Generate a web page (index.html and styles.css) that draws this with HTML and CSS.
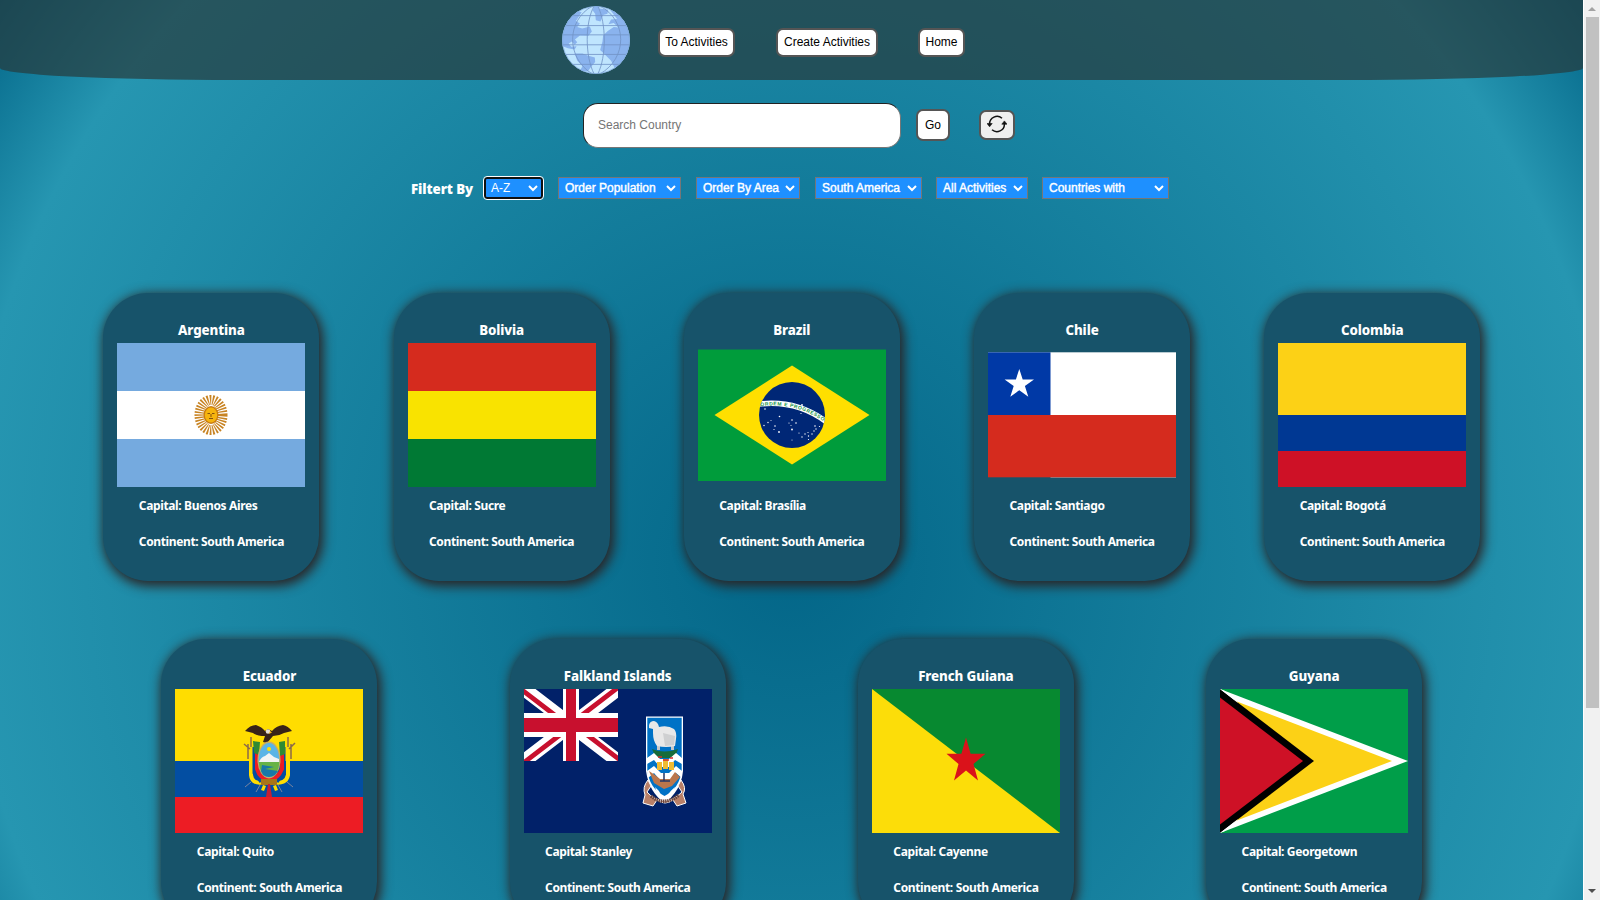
FILE: index.html
```html
<!DOCTYPE html>
<html lang="en">
<head>
<meta charset="utf-8">
<title>Countries</title>
<link rel="stylesheet" href="styles.css">
</head>
<body>
<div class="page">
<header class="nav">
  <svg class="globe" viewBox="66 17 205 205">
    <defs><clipPath id="disc"><circle cx="168.500" cy="119.500" r="102"/></clipPath></defs>
    <g clip-path="url(#disc)">
      <rect x="60" y="10" width="220" height="220" fill="#bfe5fe"/>
      <g fill="#8ab3ee">
        <path d="M60 135V60L105 30L125 36L108 62L120 70L112 80L127 85L150 79L156 94L146 107L120 106L105 118L112 126L104 134L96 124L86 130L94 140L110 138L104 148L84 144Z"/>
        <path d="M165 15L182 18L176 24L205 28L203 40L190 44L182 64L168 60L166 40L158 30Z"/>
        <path d="M212 30L290 40V230H215L225 205L214 182L196 164L181 150L188 124L190 106L204 92L222 80L236 82L222 68L206 72L214 58L232 56Z"/>
        <path d="M104 160L128 160L143 166L165 172L166 186L154 200L144 214L120 212L128 198L112 182Z"/>
      </g>
      <g fill="none" stroke="#7294c6" stroke-width="2.500">
        <path d="M60 46H280M60 76H280M60 104H280M60 134H280M60 163H280M60 193H280"/>
        <path d="M163 17C135 65 135 170 163 222M174 17C200 70 200 170 174 222M158 17C78 60 78 175 158 222M180 17C264 60 264 175 180 222"/>
      </g>
    </g>
    <circle cx="168.500" cy="119.500" r="101" fill="none" stroke="#7fa9dd" stroke-width="2"/>
  </svg>
  <button class="btn b1">To Activities</button>
  <button class="btn b2">Create Activities</button>
  <button class="btn b3">Home</button>
</header>
<div class="search">
  <input class="field" type="text" placeholder="Search Country">
  <button class="btn go">Go</button>
  <button class="btn reload"><svg viewBox="0 0 20 18" width="20" height="18"><g fill="none" stroke="#111" stroke-width="1.500"><path d="M2.600 9A7.500 7.500 0 0 1 15 3.200"/><path d="M17.400 9A7.500 7.500 0 0 1 5 14.800"/></g><path d="M0 8.500H5.200L2.600 11.800ZM14.800 9.200H20L17.400 5.900Z" fill="#111" stroke="#111" stroke-width=".6"/></svg></button>
</div>
<div class="filters">
  <span class="label">Filtert By</span>
  <div class="sel s1"><span>A-Z</span><svg class="chev" viewBox="0 0 10 7"><path d="M1 1L5 5L9 1"/></svg></div>
  <div class="sel s2"><span>Order Population</span><svg class="chev" viewBox="0 0 10 7"><path d="M1 1L5 5L9 1"/></svg></div>
  <div class="sel s3"><span>Order By Area</span><svg class="chev" viewBox="0 0 10 7"><path d="M1 1L5 5L9 1"/></svg></div>
  <div class="sel s4"><span>South America</span><svg class="chev" viewBox="0 0 10 7"><path d="M1 1L5 5L9 1"/></svg></div>
  <div class="sel s5"><span>All Activities</span><svg class="chev" viewBox="0 0 10 7"><path d="M1 1L5 5L9 1"/></svg></div>
  <div class="sel s6"><span>Countries with</span><svg class="chev" viewBox="0 0 10 7"><path d="M1 1L5 5L9 1"/></svg></div>
</div>
<main class="cards">
 <div class="row">
  <article class="card"><h3>Argentina</h3>
    <svg class="flag" viewBox="0 0 188 144"><rect width="188" height="144" fill="#75aadf"/><rect y="48" width="188" height="48" fill="#fff"/>
      <ellipse cx="94" cy="72" rx="11.500" ry="15" fill="none" stroke="#c88424" stroke-width="10" stroke-dasharray="1.400 1.150"/><ellipse cx="94" cy="72" rx="7.500" ry="9" fill="#c77a12"/><ellipse cx="94" cy="72" rx="6.200" ry="7.500" fill="#f6b40e"/><path d="M90.500 70.500H93M95 70.500H97.500M92 75.500H96M94 71V74" stroke="#85500c" stroke-width="1"/></svg>
    <p>Capital: Buenos Aires</p><p>Continent: South America</p></article>
  <article class="card"><h3>Bolivia</h3>
    <svg class="flag" viewBox="0 0 188 144"><rect width="188" height="48" fill="#d52b1e"/><rect y="48" width="188" height="48" fill="#f9e300"/><rect y="96" width="188" height="48" fill="#007934"/></svg>
    <p>Capital: Sucre</p><p>Continent: South America</p></article>
  <article class="card"><h3>Brazil</h3>
    <svg class="flag" viewBox="0 0 188 144"><defs><clipPath id="orb"><circle cx="94" cy="72" r="33"/></clipPath><path id="arc" d="M62.500 63.200Q98 58.500 127 79.500"/></defs>
      <rect y="6.500" width="188" height="131.500" fill="#009c3b"/><path d="M16.500 72L94 22.500L171.500 72L94 121.500Z" fill="#ffdf00"/><circle cx="94" cy="72" r="33" fill="#002776"/>
      <path clip-path="url(#orb)" d="M58 61.500Q98 55.500 130 80" fill="none" stroke="#fff" stroke-width="5.500"/>
      <text class="motto"><textPath href="#arc" textLength="66" lengthAdjust="spacing">ORDEM E PROGRESSO</textPath></text>
      <g fill="#fff"><circle cx="67" cy="66" r=".8"/><circle cx="104" cy="62" r=".9"/><circle cx="103" cy="70.500" r=".6"/><circle cx="81.500" cy="73.500" r=".8"/><circle cx="70" cy="79.500" r=".7"/><circle cx="73" cy="77.500" r=".5"/><circle cx="66" cy="82.500" r=".7"/><circle cx="77" cy="83" r=".8"/><circle cx="76" cy="86.500" r=".6"/><circle cx="81" cy="89" r=".9"/><circle cx="94" cy="77" r=".8"/><circle cx="91" cy="80" r=".6"/><circle cx="98" cy="80" r=".8"/><circle cx="93" cy="82.500" r=".5"/><circle cx="94" cy="86.500" r=".9"/><circle cx="94" cy="97" r=".5"/><circle cx="101" cy="90" r=".6"/><circle cx="104" cy="94" r=".7"/><circle cx="107" cy="91" r=".7"/><circle cx="110" cy="89.500" r=".6"/><circle cx="110.500" cy="93" r=".7"/><circle cx="110.500" cy="96.500" r=".6"/><circle cx="114" cy="91" r=".7"/><circle cx="116" cy="88" r=".7"/><circle cx="118" cy="86" r=".7"/><circle cx="117" cy="83" r=".8"/><circle cx="121.500" cy="83.500" r=".6"/></g></svg>
    <p>Capital: Brasília</p><p>Continent: South America</p></article>
  <article class="card"><h3>Chile</h3>
    <svg class="flag" viewBox="0 0 188 144"><rect y="9.300" width="188" height="63" fill="#fff"/><rect x="62.500" y="134" width="125.500" height="1" fill="#fff" opacity=".4"/><rect y="72" width="188" height="62.300" fill="#d52b1e"/><rect y="9.300" width="62.500" height="62.700" fill="#0039a6"/><path fill="#fff" d="M31.300 26L34.700 36.400H46L36.900 43L40.300 53.700L31.300 47.200L22.300 53.700L25.700 43L16.600 36.400H27.900Z"/></svg>
    <p>Capital: Santiago</p><p>Continent: South America</p></article>
  <article class="card"><h3>Colombia</h3>
    <svg class="flag" viewBox="0 0 188 144"><rect width="188" height="72" fill="#fcd116"/><rect y="72" width="188" height="36" fill="#003893"/><rect y="108" width="188" height="36" fill="#ce1126"/></svg>
    <p>Capital: Bogotá</p><p>Continent: South America</p></article>
 </div>
 <div class="row">
  <article class="card"><h3>Ecuador</h3>
    <svg class="flag" viewBox="0 0 188 144"><rect width="188" height="72" fill="#fd0"/><rect y="72" width="188" height="36" fill="#034ea2"/><rect y="108" width="188" height="36" fill="#ed1c24"/>
      <g fill="none"><path d="M76 53V86Q77 96 90 93M113 53V86Q111 96 98 93" stroke="#ffdd00" stroke-width="4"/><path d="M79 58V84L86 93M109 58V84L102 93" stroke="#034ea2" stroke-width="3"/><path d="M82 60V80Q85 90 94 91Q103 90 107 80V60" stroke="#ed1c24" stroke-width="4"/>
      <path d="M73 70V55M69 55L75 60M76 48V58M116 70V55M120 54L114 60M113 48V58" stroke="#8c6a4a" stroke-width="1.500"/><path d="M70 98L76 93M81 103L85 96M118 98L112 93M107 103L103 96" stroke="#7884a0" stroke-width="1"/></g>
      <path d="M78 52L85 53L84 66L79 64ZM104 53L110 52V65L105 67Z" fill="#2f8a34"/>
      <path d="M70 42Q75 36 81 36Q87 38 90 42L93 40L97 42Q101 37 108 36Q113 37 117 42L109 44Q104 47 98 47L92 54L88 53L90 47Q82 47 78 44Z" fill="#382318"/><circle cx="93" cy="42.500" r="2.300" fill="#e8e0d5"/><path d="M95 42L97 43.500L94 45Z" fill="#f6b40e"/>
      <ellipse cx="94" cy="71" rx="11.500" ry="18.500" fill="#c9ad66"/><ellipse cx="94" cy="71" rx="10.300" ry="17" fill="#5ab4e6"/><path d="M84 73Q86 68 90 67L94 64L99 68L104 70V74Z" fill="#f2f4f4"/><path d="M83.700 73H104.300Q104 80 101 84H87Q84 79 83.700 73Z" fill="#67b346"/><path d="M87 76L99 78L90 80L103 82L100 86Q94 90 88 86L86 82Z" fill="#1878a8"/><circle cx="94" cy="60" r="2" fill="#fd0"/>
      <path d="M86 90H102V96H86Z" fill="#a97518"/><path d="M88 96L91 97L89 102L86 101ZM98 97L101 96L103 101L100 102Z" fill="#fd0"/><path d="M93 95H95L97 108H91Z" fill="#c51f34"/></svg>
    <p>Capital: Quito</p><p>Continent: South America</p></article>
  <article class="card"><h3>Falkland Islands</h3>
    <svg class="flag" viewBox="0 0 188 144"><defs><clipPath id="jack"><rect width="94" height="72"/></clipPath></defs><rect width="188" height="144" fill="#012169"/>
      <g clip-path="url(#jack)"><path d="M0 0L94 72M94 0L0 72" stroke="#fff" stroke-width="14"/><path d="M-2 1L45 37M49 35L96 71M-2 75L45 39M49 33L96 -3" stroke="#c8102e" stroke-width="4.800"/><path d="M47 0V72" stroke="#fff" stroke-width="16"/><path d="M0 36H94" stroke="#fff" stroke-width="24"/><path d="M42 0H52V29H94V43H52V72H42V43H0V29H42Z" fill="#c8102e"/></g>
      <path d="M122 27.500H159V82Q157 102 140.500 114Q125 103 122 82Z" fill="#fff"/><path d="M123.300 28.800H157.700V81Q156 99 140.500 107Q125 99 123.300 81Z" fill="#0072c6"/>
      <path d="M133 54V61H136V56H147V61H150V54Z" fill="#c9c9c9"/><path d="M125 36Q126 32 130 32Q134 33 135 38Q144 36 150 40Q153 43 152 50L151 57Q142 59 133 57Q129 52 129 44L129 40L125 39Z" fill="#e8e8e8"/><path d="M139 44L151 47L150 56L141 57Z" fill="#cfd0d1"/>
      <path d="M128 60Q140 65 154 60L151 69H132Z" fill="#176b3a"/>
      <path d="M123 69L130 64L136 70L145 70L152 64L158 69V75L151 71L145 78L136 78L130 71L123 75ZM123 82L130 77L137 84H145L152 77L158 82V89L152 84L146 91H136L130 84L124 89Z" fill="#fff"/>
      <path d="M133 73H138V81H133ZM139 70H144V80H139ZM145 73H150V81H145Z" fill="#f0bb32"/><path d="M134 68H138M139 71H145M146 69H149" stroke="#d32e2e" stroke-width="1.500"/><path d="M125 82L131 86L136 90H146L151 83L156 88L148 97L140 100L130 94Z" fill="#ba764c"/><path d="M136 92H146M140 84V92" stroke="#253767" stroke-width="1.500"/>
      <path d="M131 98Q135 101 137 106Q140.500 109 144 106Q147 101 151 98L146 110L140.500 113L135 109Z" fill="#fff"/>
      <path d="M124 91Q118 98 121 106L119 114L129 117L133 111Q141 117 149 111L153 117L162 114L159 105Q163 99 157 91L154 97L158 103Q149 112 140.500 112Q130 111 123 103L127 97Z" fill="#b98068" stroke="#fff" stroke-width="1"/><path d="M127 107Q140 118 155 106" fill="none" stroke="#6b463d" stroke-width="3.500" stroke-dasharray="1.500 .7"/></svg>
    <p>Capital: Stanley</p><p>Continent: South America</p></article>
  <article class="card"><h3>French Guiana</h3>
    <svg class="flag" viewBox="0 0 188 144"><rect width="188" height="144" fill="#078930"/><path d="M0 0L188 144H0Z" fill="#fcdd09"/><path fill="#da121a" d="M94 48.500L98.600 64.800H113.500L101.500 75L106 91.500L94 81.500L82 91.500L86.500 75L74.500 64.800H89.400Z"/></svg>
    <p>Capital: Cayenne</p><p>Continent: South America</p></article>
  <article class="card"><h3>Guyana</h3>
    <svg class="flag" viewBox="0 0 188 144"><rect width="188" height="144" fill="#009e49"/><path d="M0 0L188 72L0 144Z" fill="#fff"/><path d="M0 6L172 72L0 138Z" fill="#fcd116"/><path d="M0 0L94 72L0 144Z" fill="#000"/><path d="M0 8.500L83 72L0 135.500Z" fill="#ce1126"/><path d="M0 0L18 14L17 12.500L4 1.500ZM0 144L18 130L17 131.500L4 142.500Z" fill="#fff"/></svg>
    <p>Capital: Georgetown</p><p>Continent: South America</p></article>
 </div>
</main>
</div>
<div class="scrollbar"><i class="up"></i><i class="thumb"></i><i class="down"></i></div>
</body>
</html>
```
FILE: styles.css
```css
* { box-sizing: border-box; }
body { margin: 0; height: 900px; overflow: hidden; display: grid; grid-template-columns: 1583px 17px; }
.page { height: 1126px; background: radial-gradient(circle, #036688 0%, #2696b1 85%, #036688 100%); }
.nav { height: 80px; background: rgba(39,58,60,.7); border-radius: 0 0 15% 15%; display: flex; align-items: flex-start; padding: 6px 0 0 562px; }
.globe { width: 68px; height: 68px; flex: none; }
.btn { font: 12px "Liberation Sans", Arial, sans-serif; color: #000; background: #fff; border: 2px solid #555; border-radius: 7px; padding: 0; white-space: nowrap; display: flex; align-items: center; justify-content: center; height: 29px; flex: none; }
.nav .btn { margin-top: 22px; padding-bottom: 2px; }
.b1 { width: 77px; margin-left: 28px; }
.b2 { width: 102px; margin-left: 41px; }
.b3 { width: 47px; margin-left: 40px; }
.search { display: flex; align-items: center; height: 46px; margin: 22px 0 0 583px; }
.field { width: 318px; height: 45px; border: 1px solid #767676; border-top-color: #222; border-left-color: #222; border-radius: 15px; padding: 0 14px 1px; font: 12px "Liberation Sans", Arial, sans-serif; background: #fff; }
.field::placeholder { color: #757575; }
.btn.go { width: 34px; height: 32px; margin-left: 15px; }
.btn.reload { width: 36px; height: 30px; margin-left: 29px; background: #efefef; padding: 0 1px 3px 0; }
.filters { display: flex; height: 22px; margin: 29px 0 0 411px; align-items: center; }
.label { width: 73px; font: 800 13.300px "Open Sans", sans-serif; letter-spacing: -.1px; color: #fff; white-space: nowrap; padding-top: 2px; }
.sel { height: 22px; background: #1e90ff; border: 1px solid #767676; display: flex; align-items: center; justify-content: space-between; padding: 0 4px 1px 6px; color: #fff; font: 12px "Liberation Sans", Arial, sans-serif; white-space: nowrap; -webkit-text-stroke: .4px #fff; }
.chev { width: 10px; height: 7px; fill: none; stroke: #fff; stroke-width: 2; position: relative; top: 1px; }
.s1 { width: 59px; border: 2px solid #101010; border-radius: 3px; outline: 1px solid #fff; padding-left: 5px; padding-right: 3px; -webkit-text-stroke: 0; }
.s2 { width: 123px; margin-left: 15px; }
.s3 { width: 104px; margin-left: 15px; }
.s4 { width: 107px; margin-left: 15px; }
.s5 { width: 92px; margin-left: 14px; }
.s6 { width: 127px; margin-left: 14px; }
.cards { display: flex; flex-direction: column; gap: 58px; padding: 94px 28.500px 0 29.200px; }
.row { display: flex; justify-content: space-evenly; }
.card { width: 216px; height: 288px; border-radius: 45px; background: #17536a; box-shadow: 2px 3px 12px 2px #2b2323; padding: 28px 14px 0; color: #fff; font-family: "Noto Sans", "Open Sans", sans-serif; }
.card h3 { margin: 0; height: 22px; line-height: 18px; font-size: 13.300px; font-weight: 800; text-align: center; white-space: nowrap; letter-spacing: -.1px; }
.flag { display: block; width: 188px; height: 144px; }
.card p { margin: 0 0 0 21.400px; height: 36px; line-height: 38px; font-size: 12px; font-weight: 700; white-space: nowrap; letter-spacing: -.36px; }
.motto { font: bold 5px "Liberation Sans", sans-serif; fill: #159447; }
.scrollbar { height: 900px; background: #f1f1f1; display: flex; flex-direction: column; align-items: center; border-left: 1px solid #fff; }
.up, .down { width: 0; height: 0; border: 4px solid transparent; }
.up { border-bottom-color: #a3a3a3; border-top: 0; margin: 7px 0 6px; }
.thumb { width: 13px; height: 691px; background: #c1c1c1; }
.down { border-top-color: #505050; border-bottom: 0; margin-top: auto; margin-bottom: 7px; }
```
